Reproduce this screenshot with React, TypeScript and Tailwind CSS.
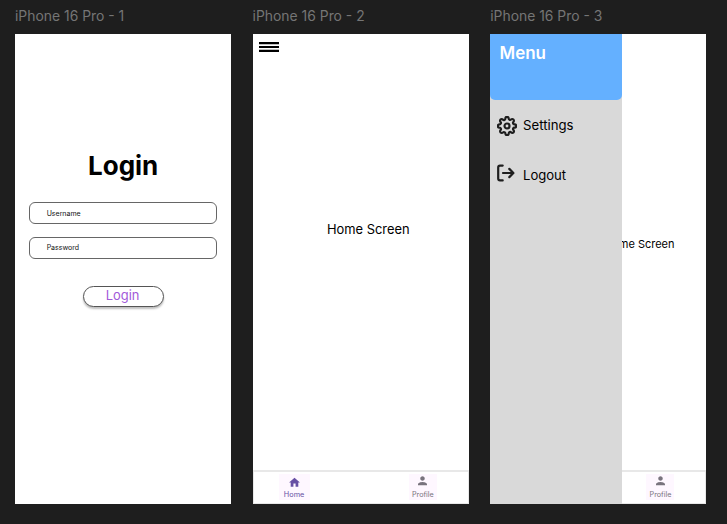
import type { ReactNode } from "react";
import { FiSettings } from "react-icons/fi";
import { MdHome, MdPerson } from "react-icons/md";

function Phone({ title, children }: { title: string; children: ReactNode }) {
  return (
    <section className="w-[216.3px] shrink-0">
      <h2 className="h-[34px] pt-[6px] text-[13.9px] leading-[20px] whitespace-nowrap text-[#757575]">{title}</h2>
      <div className="relative flex h-[470px] flex-col overflow-hidden bg-white">{children}</div>
    </section>
  );
}

function Field({ label }: { label: string }) {
  return (
    <div className="flex h-[22px] w-[188px] items-center rounded-[6px] border border-[#666] pl-[16.5px] text-[7px] leading-none text-[#111]">
      {label}
    </div>
  );
}

function TabBar() {
  return (
    <nav className="mt-auto flex h-[34px] items-start justify-between border border-t-2 border-[#e8e8e8] pt-[2px] pr-[31px] pl-[25px]">
      <div className="flex h-[26px] w-[31px] flex-col items-center bg-[#fef7ff] pt-[2px] text-[#6750a4]">
        <MdHome className="size-[13px]" />
        <span className="pt-px text-[7.3px] leading-[10px]">Home</span>
      </div>
      <div className="flex h-[26px] w-[28px] flex-col items-center bg-[#fef7ff] text-[#79747e]">
        <MdPerson className="size-[15px]" />
        <span className="pt-[2.5px] text-[7.2px] leading-[10px]">Profile</span>
      </div>
    </nav>
  );
}

export default function App() {
  return (
    <main className="flex h-[524px] w-[727px] gap-[21.3px] overflow-hidden bg-[#1e1e1e] pl-[15px] font-['Inter',sans-serif] text-black">
      <Phone title="iPhone 16 Pro - 1">
        <div className="flex flex-col items-center">
          <h1 className="pt-[115.5px] text-[26px] leading-[32px] font-bold">Login</h1>
          <div className="flex flex-col gap-[12.5px] pt-[20.5px]">
            <Field label="Username" />
            <Field label="Password" />
          </div>
          <button className="mt-[27.5px] flex h-[21px] w-[81px] items-center justify-center rounded-full border border-[#555] bg-white pr-px text-[12.9px] leading-none text-[#a259d9] shadow-[0_2px_2px_rgba(0,0,0,0.25)]">
            Login
          </button>
        </div>
      </Phone>

      <Phone title="iPhone 16 Pro - 2">
        <svg className="mt-2 ml-[6px] h-[10px] w-5" viewBox="0 0 20 10" stroke="#000" strokeWidth="2.2">
          <path d="M0 1.2h20M0 5h20M0 8.8h20" />
        </svg>
        <p className="pt-[169px] pl-[74.3px] text-[12.9px] leading-[17px] whitespace-nowrap">Home Screen</p>
        <TabBar />
      </Phone>

      <Phone title="iPhone 16 Pro - 3">
        <p className="pt-[202px] pl-[113.8px] text-[11px] leading-4 whitespace-nowrap">Home Screen</p>
        <TabBar />
        <aside className="absolute inset-y-0 left-0 w-[131.8px] bg-[#d9d9d9]">
          <header className="h-[65.5px] rounded-b-[5px] bg-[#64b0ff] pt-[8px] pl-[9.3px] text-[17px] leading-[22px] font-semibold text-white">
            Menu
          </header>
          <div className="flex items-start gap-[6px] pt-[15.5px] pl-[6.8px]">
            <FiSettings className="mt-[0.5px] size-5 text-[#1e1e1e]" strokeWidth={2.6} />
            <span className="text-[13.2px] leading-5">Settings</span>
          </div>
          <div className="flex items-center pt-[28.5px] pl-[6.8px]">
            <svg className="mb-1 h-[18px] w-[19px]" viewBox="0 0 19 18" fill="none" stroke="#1e1e1e" strokeWidth="2.2" strokeLinecap="round" strokeLinejoin="round">
              <path d="M5.7 1.6H3a1.8 1.8 0 0 0-1.8 1.8v11.2A1.8 1.8 0 0 0 3 16.4h2.7M6 9h10.3M12.3 4.9 16.4 9l-4.1 4.1" />
            </svg>
            <span className="pl-[7px] text-[13.1px] leading-5">Logout</span>
          </div>
        </aside>
      </Phone>
    </main>
  );
}
